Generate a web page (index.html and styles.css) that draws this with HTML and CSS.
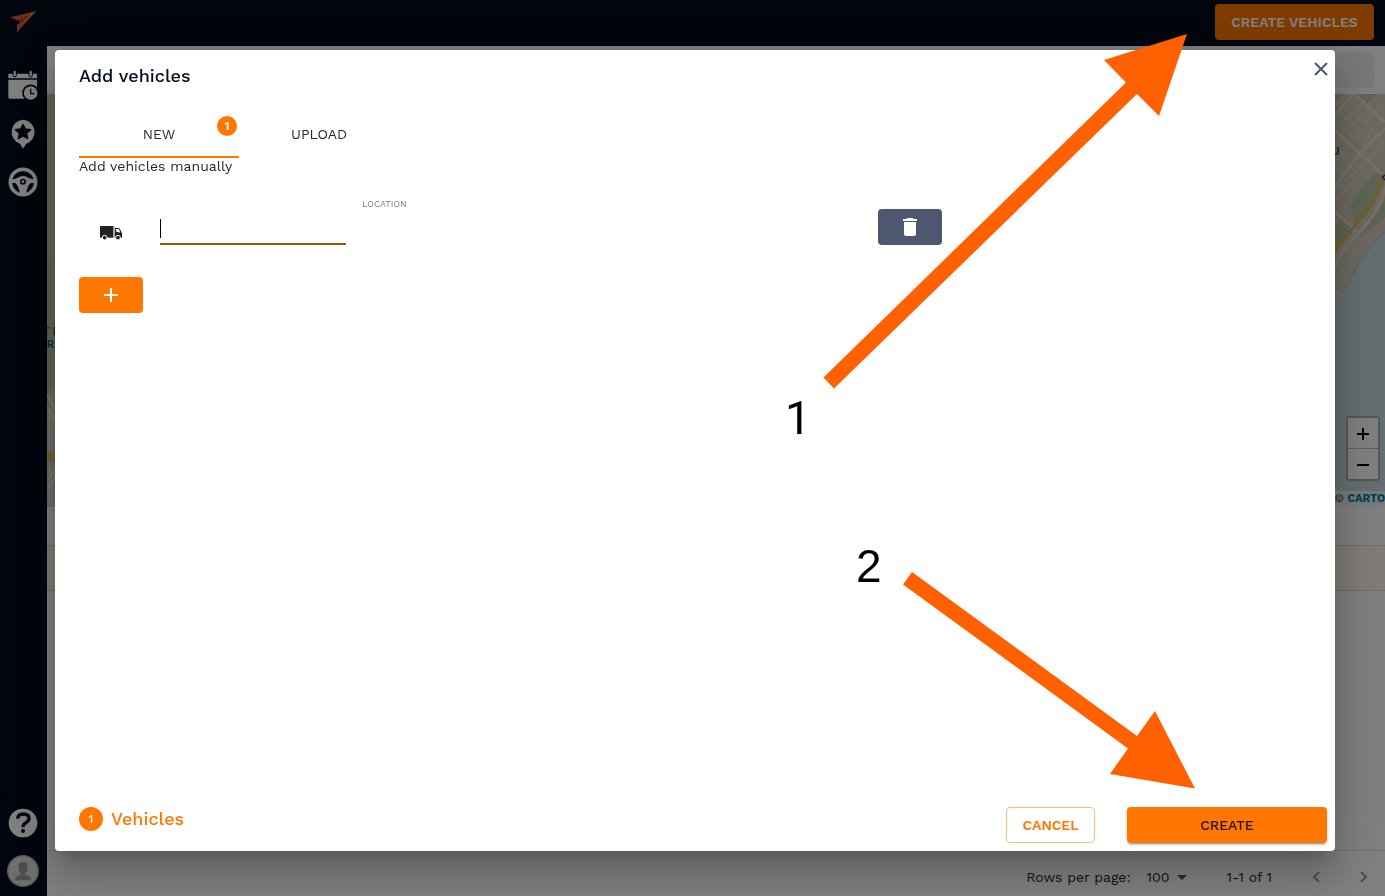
FILE: index.html
```html
<!DOCTYPE html>
<html lang="en">
<head>
<meta charset="utf-8">
<title>Add vehicles</title>
<link rel="stylesheet" href="styles.css">
</head>
<body>
<div class="app">
  <header class="topbar">
    <svg class="logo" viewBox="0 0 78 66" role="img" aria-label="Home">
      <defs><linearGradient id="lg" x1="0" y1="0" x2="1" y2="0"><stop offset="0" stop-color="#e8513a"/><stop offset=".5" stop-color="#e05a35"/><stop offset="1" stop-color="#f58a1c"/></linearGradient></defs>
      <path fill="url(#lg)" d="M0 19 78 1 21 64 21 42 32 32 20 28Z"/>
      <path d="M22 29 34 26 58 13M24 38 38 28" fill="none" stroke="#020c1c" stroke-width="2" stroke-dasharray="8 3"/>
    </svg>
    <button class="btn btn-primary" type="button">CREATE VEHICLES</button>
  </header>
  <div class="main">
    <nav class="sidebar">
      <a class="nav-item" href="#" aria-label="Schedule">
        <svg width="30" height="32" viewBox="0 0 90 96">
          <path fill="#fff" d="M1 11h86v14H1zM1 29h86v57H5q-4 0-4-4z"/>
          <path fill="#fff" stroke="#020c1c" stroke-width="3" d="M15 6a5 5 0 0 1 10 0v10a5 5 0 0 1-10 0zM63 6a5 5 0 0 1 10 0v10a5 5 0 0 1-10 0z"/>
          <circle cx="68" cy="69" r="23" fill="#fff" stroke="#020c1c" stroke-width="5"/>
          <path d="M68 56v15h11" fill="none" stroke="#020c1c" stroke-width="4"/>
        </svg>
      </a>
      <a class="nav-item" href="#" aria-label="Places">
        <svg width="26" height="30" viewBox="0 0 78 90">
          <path fill="#fff" d="M39 2a37 37 0 0 1 10 72L39 89 30 74A37 37 0 0 1 39 2z"/>
          <path fill="#020c1c" stroke="#020c1c" stroke-width="4" stroke-linejoin="round" d="m39 16 7 14 16 2-12 11 3 16-14-8-14 8 3-16-12-11 16-2z"/>
        </svg>
      </a>
      <a class="nav-item" href="#" aria-label="Drivers">
        <svg width="30" height="30" viewBox="0 0 90 90">
          <circle cx="45" cy="45" r="38" fill="none" stroke="#fff" stroke-width="11"/>
          <path fill="#fff" d="M9 37q18-2 24-7 12-6 24 0 6 5 24 7v11H69q-10 5-15 32H36Q31 53 21 48H9z"/>
          <circle cx="45" cy="44" r="9" fill="#020c1c"/><circle cx="45" cy="44" r="4" fill="#fff"/>
        </svg>
      </a>
      <span class="brace">}</span>
      <a class="nav-item" href="#" aria-label="Help">
        <svg width="30" height="30" viewBox="0 0 90 90">
          <circle cx="45" cy="45" r="43" fill="#fff"/>
          <path d="M29 32q1-14 17-14 17 0 17 13 0 8-9 13-9 4-9 14" fill="none" stroke="#020c1c" stroke-width="10"/>
          <circle cx="45" cy="69" r="6" fill="#020c1c"/>
        </svg>
      </a>
      <a class="nav-item" href="#" aria-label="Account">
        <svg width="32" height="32" viewBox="0 0 96 96">
          <circle cx="48" cy="48" r="46" fill="#dedede" stroke="#aaa" stroke-width="4"/>
          <path fill="#9b9b9b" d="M34 36q0-15 14-15t14 15-7 17v6q17 4 17 17H24q0-13 17-17v-6q-7-2-7-17z"/>
        </svg>
      </a>
    </nav>
    <main class="content">
      <div class="filters"><div class="filter"></div></div>
      <div class="map">
        <svg class="map-left" viewBox="141 0 24 1239">
          <path fill="#dcd5c8" d="M141 0h24v1239h-24z"/>
          <path fill="#b6c8a0" d="M141 0h24v880l-24 24z"/>
          <path fill="#c3d0b1" d="M141 0h24v500h-24z" opacity=".4"/>
          <path d="M141 900 165 948M141 935l24 50M141 980l24-25M141 1160l24-35M141 1185l24-35" stroke="#f2eadc" stroke-width="6" fill="none"/>
          <path d="M141 915 165 963M141 1150l24-35" stroke="#e4c487" stroke-width="3" fill="none"/>
          <path fill="#e0c36f" d="M141 1075l24 3v28l-24-6z"/>
          <text class="map-label" x="128" y="722">T P</text>
          <text class="map-label" x="140" y="763">RT</text>
        </svg>
        <svg class="map-right" viewBox="105 12 150 1239">
          <path fill="#d8d0c3" d="M105 12h150v1239H105z"/>
          <path fill="#b9cba9" d="M167 12h65l-32 30zM105 30l25-18h-25zM105 85l18-18-18-14zM150 350l45-70 50-45 10 30-30 60-60 80zM105 405l25-25 25 30-50 55zM170 425l85-105v60l-70 60z"/>
          <g fill="none" stroke="#e8cfa0" stroke-width="10"><path d="M105 75 160 12M255 110 105 380M105 120l80 75 70 65M105 355l70 75"/></g>
          <g fill="none" stroke="#e9e4dc" stroke-width="7"><path d="M105 75 160 12M105 120l80 75 70 65M165 12l90 85M255 115 180 190 105 290M105 365l70 65"/></g>
          <g fill="none" stroke="#ece6dc" stroke-width="3"><path d="M118 65l60 55 28 28M132 95l70-72M150 115l70-70M176 80l55 50M190 100l55-55M128 110q20 30 60 40 25-5 18-18M105 215l20-20 50 60M120 180l60 55 30 35M135 240l65-70M150 265l65-65M105 300l80-80M105 330l85-85M125 285l30 30M190 170l35-35 25 25M205 215l35-45"/></g>
          <path fill="#dcc067" d="M255 250q-10 70-55 125-40 40-95 115v-35l45-35q45-60 58-80 20-30 35-85z"/>
          <path d="M255 290q-5 60-80 140-20 20-40 45-20 25-30 70" fill="none" stroke="#e8cfa0" stroke-width="11"/>
          <path d="M255 290q-5 60-80 140-20 20-40 45-20 25-30 60" fill="none" stroke="#eae4d9" stroke-width="7"/>
          <path fill="#c9dde0" stroke="#a9c6cc" stroke-width="3" d="M258 425Q220 450 175 525q-20 35-47 82l-26-14v660h158z"/>
          <path d="M122 600l33 40M105 615l38 38" stroke="#d8d0c3" stroke-width="6"/>
          <text class="map-label" x="95" y="196">U</text>
          <path d="m257 254-10 8 10 9" fill="none" stroke="#35435a" stroke-width="4"/>
        </svg>
        <div class="zoom">
          <button type="button" aria-label="Zoom in"><svg width="14" height="14"><path d="M7 1v12M1 7h12" stroke="#000" stroke-width="2"/></svg></button>
          <button type="button" aria-label="Zoom out"><svg width="14" height="14"><path d="M1 7h12" stroke="#000" stroke-width="2"/></svg></button>
        </div>
        <div class="credit">© <a href="#">CARTO</a></div>
      </div>
      <div class="list"><div class="list-row"></div></div>
      <footer class="pager">
        <label for="rows">Rows per page:</label>
        <span class="rows-box"><select id="rows"><option>100</option></select><svg width="10" height="5"><path d="M0 0h10L5 5z" fill="#555"/></svg></span>
        <span class="range">1-1 of 1</span>
        <button type="button" aria-label="Previous page"><svg width="24" height="24"><path d="m15 7-5 5 5 5" fill="none" stroke="#9b9b9b" stroke-width="2"/></svg></button>
        <button type="button" aria-label="Next page"><svg width="24" height="24"><path d="m9 7 5 5-5 5" fill="none" stroke="#9b9b9b" stroke-width="2"/></svg></button>
      </footer>
    </main>
  </div>
</div>

<div class="backdrop">
  <section class="dialog" role="dialog" aria-labelledby="dialog-title">
    <div class="dialog-head">
      <h2 id="dialog-title">Add vehicles</h2>
      <button class="close" type="button" aria-label="Close"><svg width="14" height="14"><path d="m1 1 12 12M13 1 1 13" stroke="#4d5870" stroke-width="2"/></svg></button>
    </div>
    <div class="dialog-body">
      <div class="tabs" role="tablist">
        <button class="tab tab-active" role="tab" type="button">NEW<span class="badge tab-badge">1</span></button>
        <button class="tab" role="tab" type="button">UPLOAD</button>
      </div>
      <p class="hint">Add vehicles manually</p>
      <div class="vehicle">
        <svg class="truck" viewBox="0 0 66 45">
          <path fill="#212121" d="M0 3h40v35H0z"/><path fill="#8a8a8a" d="M41 3h3v35h-3z"/>
          <path fill="#212121" d="M45 9h10q4 0 6 5l5 11v13H45z"/>
          <path fill="#fff" d="M47 12h7q3 0 4 3l3 8-12-3z"/>
          <g fill="#212121" stroke="#fff" stroke-width="3"><circle cx="14" cy="38" r="7"/><circle cx="54" cy="38" r="7"/></g>
        </svg>
        <div class="name-field"><input type="text" aria-label="Vehicle name"></div>
        <span class="location">LOCATION</span>
        <button class="btn btn-icon btn-delete" type="button" aria-label="Delete vehicle"><svg width="24" height="24" viewBox="0 0 24 24"><path fill="#fff" d="M6 19c0 1.100.9 2 2 2h8c1.100 0 2-.9 2-2V7H6v12zM19 4h-3.500l-1-1h-5l-1 1H5v2h14V4z"/></svg></button>
      </div>
      <button class="btn btn-icon btn-primary btn-add" type="button" aria-label="Add vehicle"><svg width="24" height="24"><path d="M12 5v14M5 12h14" stroke="#fff" stroke-width="2"/></svg></button>
    </div>
    <div class="dialog-foot">
      <div class="count"><span class="badge count-badge">1</span>Vehicles</div>
      <div class="actions">
        <button class="btn btn-outline" type="button">CANCEL</button>
        <button class="btn btn-submit" type="button">CREATE</button>
      </div>
    </div>
  </section>
</div>

<svg class="notes" width="1385" height="896" viewBox="0 0 1385 896">
  <path d="M1187 34 1159 116 1137 94 834 388.500 823.500 377.500 1126 82.500 1104 60Z"/>
  <path d="M1195 788.500 1110 774 1128 748.500 903 584.500 912 572 1137 736 1155 711Z"/>
  <text class="step step-one" x="785" y="434">1</text>
  <text class="step" x="856" y="582">2</text>
</svg>
</body>
</html>
```
FILE: styles.css
```css
* { box-sizing: border-box; }
body {
  margin: 0;
  font-family: "Work Sans", Inter, sans-serif;
  font-size: 14px;
  line-height: 16px;
  color: #212833;
  overflow: hidden;
}
button, input, select { font: inherit; color: inherit; border: 0; margin: 0; padding: 0; background: none; }
svg { display: block; flex: none; }

.app { display: flex; flex-direction: column; height: 100vh; }
.topbar {
  display: flex; align-items: center; justify-content: space-between;
  height: 46px; padding: 0 11px 2px 10px; flex: none;
  background: #020c1c;
}
.logo { width: 26px; height: 22px; }
.btn {
  display: inline-flex; align-items: center; justify-content: center;
  height: 36px; padding: 0 15px; border-radius: 4px;
  font-weight: 600;
}
.btn-primary { background: #ff7700; color: #fff; }
.topbar .btn { min-width: 159px; }

.main { display: flex; flex: 1; min-height: 0; }
.sidebar {
  display: flex; flex-direction: column; flex: none;
  width: 47px; padding: 16px 1px 1px 0;
  background: #020c1c;
}
.nav-item { display: flex; align-items: center; justify-content: center; height: 48px; }
.brace { margin-top: auto; color: #000; }

.content { display: flex; flex-direction: column; flex: 1; min-width: 0; background: #fff; }
.filters { padding: 6px 11px; flex: none; }
.filter { height: 36px; border-radius: 4px; background: #f0f0f0; }
.map {
  position: relative; display: flex; justify-content: space-between;
  height: 413px; flex: none; background: #c9dde0; overflow: hidden;
}
.map-left { width: 8px; height: 413px; }
.map-right { width: 50px; height: 413px; }
.map-label { font-size: 33px; font-weight: 600; fill: #40506e; }
.zoom {
  position: absolute; right: 5px; bottom: 26px;
  border: 2px solid rgba(0, 0, 0, .2); border-radius: 4px;
}
.zoom button { display: flex; align-items: center; justify-content: center; width: 30px; height: 30px; padding-top: 2px; background: #fff; }
.zoom button:first-child { height: 31px; border-bottom: 1px solid #bbb; }
.credit {
  position: absolute; right: 0; bottom: 0;
  font-size: 11px; background: rgba(255, 255, 255, .7); color: #333;
}
.credit a { color: #0078a8; font-weight: 700; text-decoration: none; }
.list { flex: 1; padding-top: 38px; border-bottom: 1px solid #ddd; }
.list-row { height: 46px; background: #fff5eb; border: solid #ddd; border-width: 1px 0; }
.pager {
  display: flex; align-items: center; justify-content: flex-end;
  height: 45px; padding: 7px 9px 0 0; flex: none;
}
.rows-box { display: flex; align-items: center; gap: 7px; margin: 0 40px 0 16px; }
.rows-box select { appearance: none; }
.range { margin-right: 32px; }
.pager button + button { margin-left: 24px; }

.backdrop {
  position: fixed; inset: 0; display: flex;
  padding: 50px 50px 45px 55px;
  background: rgba(0, 0, 0, .5);
}
.dialog {
  display: flex; flex-direction: column; flex: 1;
  background: #fff; border-radius: 4px;
  box-shadow: 0 11px 15px -7px rgba(0, 0, 0, .2), 0 24px 38px 3px rgba(0, 0, 0, .14), 0 9px 46px 8px rgba(0, 0, 0, .12);
}
.dialog-head { display: flex; justify-content: space-between; padding: 12px 7px 0 24px; }
.dialog-head h2 { margin: 0; font-size: 18px; line-height: 28px; font-weight: 500; color: #020c1c; }
.close { height: 14px; }
.dialog-body { flex: 1; padding: 20px 24px 0; }
.tabs { display: flex; }
.tab { position: relative; width: 160px; height: 48px; }
.tab-active { border-bottom: 2px solid #ff7700; padding-top: 2px; }
.badge {
  display: inline-flex; align-items: center; justify-content: center;
  width: 20px; height: 20px; border-radius: 50%;
  background: #ff7700; color: #fff; font-size: 12px; font-weight: 600;
}
.tab-badge { position: absolute; top: 6px; right: 2px; }
.hint { margin: 0; }
.vehicle {
  display: grid; grid-template-columns: 65px 186px 1fr 64px; column-gap: 16px; align-items: end;
  max-width: 863px; height: 48px; margin-top: 23px;
}
.truck { width: 22px; height: 15px; margin: 0 0 5px 21px; }
.name-field { position: relative; border-bottom: 2px solid #a85100; }
.name-field input { display: block; width: 100%; height: 30px; outline: 0; }
.name-field::before { content: ""; position: absolute; left: 0; top: 6px; width: 1px; height: 19px; background: #000; }
.location { align-self: start; font-size: 9px; line-height: 14px; color: #777; }
.btn-icon { width: 64px; padding: 0; }
.btn-delete { background: #4d5870; }
.btn-add { margin-top: 32px; }
.dialog-foot { display: flex; align-items: flex-start; justify-content: space-between; padding: 0 8px 8px 24px; }
.count { display: flex; align-items: center; gap: 8px; color: #ff7700; font-size: 18px; font-weight: 500; }
.count-badge { width: 24px; height: 24px; font-weight: 500; }
.actions { display: flex; gap: 32px; }
.btn-outline { border: 1px solid #ffbb80; color: #ff7700; min-width: 89px; }
.btn-submit {
  width: 200px; background: #ff7700; color: #241303; font-weight: 500;
  box-shadow: 0 3px 1px -2px rgba(0, 0, 0, .2), 0 2px 2px rgba(0, 0, 0, .14), 0 1px 5px rgba(0, 0, 0, .12);
}

.notes { position: absolute; left: 0; top: 0; pointer-events: none; fill: #ff6000; }
.step { font-family: "Liberation Sans", sans-serif; font-size: 46px; fill: #000; }
.step-one { font-family: Roboto, sans-serif; }
```
